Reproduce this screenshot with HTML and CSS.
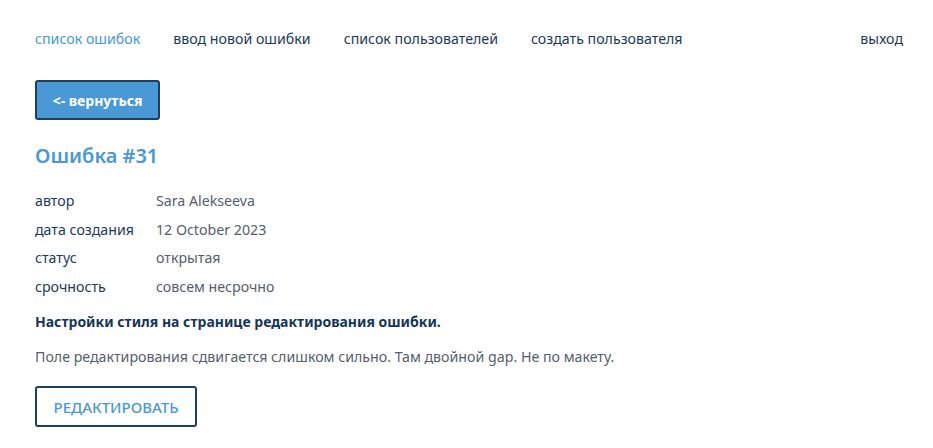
FILE: index.html
```html
<!DOCTYPE html>
<html lang="ru">
<head>
<meta charset="utf-8">
<title>Ошибка #31</title>
<link rel="stylesheet" href="styles.css">
</head>
<body>
<header class="nav">
  <a class="nav-link active" href="#">список ошибок</a>
  <a class="nav-link" href="#">ввод новой ошибки</a>
  <a class="nav-link" href="#">список пользователей</a>
  <a class="nav-link" href="#">создать пользователя</a>
  <a class="nav-link logout" href="#">выход</a>
</header>
<main class="content">
  <button class="btn-back">&lt;- вернуться</button>
  <h1 class="title">Ошибка #31</h1>
  <dl class="info">
    <dt>автор</dt><dd>Sara Alekseeva</dd>
    <dt>дата создания</dt><dd>12 October 2023</dd>
    <dt>статус</dt><dd>открытая</dd>
    <dt>срочность</dt><dd>совсем несрочно</dd>
  </dl>
  <p class="summary">Настройки стиля на странице редактирования ошибки.</p>
  <p class="desc">Поле редактирования сдвигается слишком сильно. Там двойной gap. Не по макету.</p>
  <button class="btn-edit">РЕДАКТИРОВАТЬ</button>
</main>
</body>
</html>
```
FILE: styles.css
```css
* { box-sizing: border-box; }
body {
  margin: 0;
  font-family: "Noto Sans", "Open Sans", sans-serif;
  font-size: 14.2px;
  color: #1d3a5b;
  background: #fff;
}
.nav {
  display: flex;
  align-items: center;
  gap: 33px;
  padding: 27px 30px 0 35px;
  height: 50px;
}
.nav-link {
  color: #1d3a5b;
  text-decoration: none;
  line-height: 22px;
}
.nav-link.active { color: #4a98d6; }
.nav-link.logout { margin-left: auto; }
.content {
  padding: 30px 35px 0;
  display: flex;
  flex-direction: column;
  align-items: flex-start;
}
.btn-back {
  font-family: inherit;
  font-size: 14px;
  font-weight: 700;
  color: #fff;
  background: #4a98d4;
  border: 2px solid #1d3f5f;
  border-radius: 3px;
  height: 40px;
  width: 125px;
  padding: 0;
}
.title {
  margin: 21px 0 0;
  font-size: 20px;
  font-weight: 600;
  color: #4a98d6;
  line-height: 30px;
}
.info {
  margin: 19px 0 0;
  display: grid;
  grid-template-columns: 121px auto;
  row-gap: 6.7px;
  line-height: 22px;
}
.info dt { color: #1d3a5b; }
.info dd { margin: 0; color: #56606b; }
.summary {
  margin: 13px 0 0;
  font-size: 14px;
  font-weight: 700;
  color: #15355a;
  line-height: 22px;
}
.desc {
  margin: 13px 0 0;
  color: #56606b;
  line-height: 22px;
}
.btn-edit {
  margin-top: 18px;
  font-family: inherit;
  font-size: 15px;
  font-weight: 500;
  color: #4a98d6;
  background: #fff;
  border: 2px solid #1d3f5f;
  border-radius: 3px;
  height: 41px;
  width: 162px;
  padding: 0;
}
```
